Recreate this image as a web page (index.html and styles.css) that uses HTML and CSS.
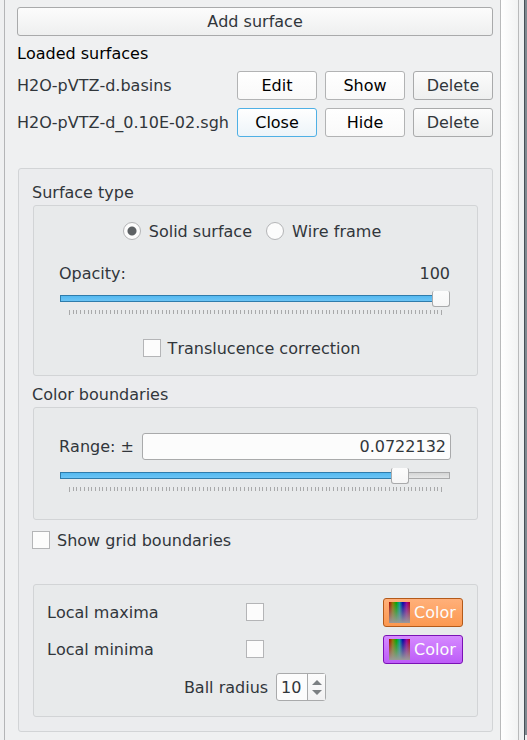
FILE: index.html
```html
<!DOCTYPE html>
<html lang="en">
<head>
<meta charset="utf-8">
<title>Surfaces</title>
<link rel="stylesheet" href="styles.css">
</head>
<body>
<div class="window">
  <main class="panel">
    <button class="btn add" type="button">Add surface</button>
    <h2 class="heading">Loaded surfaces</h2>
    <div class="surfaces">
      <span class="name">H2O-pVTZ-d.basins</span>
      <button class="btn toggle" type="button">Edit</button>
      <button class="btn toggle" type="button">Show</button>
      <button class="btn" type="button">Delete</button>
      <span class="name">H2O-pVTZ-d_0.10E-02.sgh</span>
      <button class="btn toggle active" type="button">Close</button>
      <button class="btn toggle" type="button">Hide</button>
      <button class="btn" type="button">Delete</button>
    </div>

    <section class="group editor">
      <h3 class="title">Surface type</h3>
      <div class="group type">
        <div class="choices">
          <label class="choice"><input class="radio" type="radio" name="style" checked>Solid surface</label>
          <label class="choice"><input class="radio" type="radio" name="style">Wire frame</label>
        </div>
        <div class="caption"><label for="opacity">Opacity:</label><output for="opacity">100</output></div>
        <input class="slider" id="opacity" type="range" min="0" max="100" value="100" style="--value: 100%">
        <svg class="ticks" height="5" aria-hidden="true"><use href="#ticks"/></svg>
        <div class="choices single">
          <label class="choice"><input class="check" type="checkbox">Translucence correction</label>
        </div>
      </div>

      <h3 class="title second">Color boundaries</h3>
      <div class="group bounds">
        <div class="field">
          <label for="range">Range: ±</label>
          <input class="text" id="range" type="text" value="0.0722132">
        </div>
        <input class="slider" type="range" min="0" max="100" value="89" aria-label="Range" style="--value: 89%">
        <svg class="ticks" height="5" aria-hidden="true"><use href="#ticks"/></svg>
      </div>

      <label class="choice grid-bounds"><input class="check" type="checkbox">Show grid boundaries</label>

      <div class="group extrema">
        <div class="row">
          <label for="maxima">Local maxima</label>
          <input class="check" id="maxima" type="checkbox">
          <button class="btn color orange" type="button"><svg class="spectrum" viewBox="0 0 21 21" aria-hidden="true"><use href="#spectrum"/></svg>Color</button>
        </div>
        <div class="row">
          <label for="minima">Local minima</label>
          <input class="check" id="minima" type="checkbox">
          <button class="btn color violet" type="button"><svg class="spectrum" viewBox="0 0 21 21" aria-hidden="true"><use href="#spectrum"/></svg>Color</button>
        </div>
        <div class="radius">
          <label for="radius">Ball radius</label>
          <div class="spin">
            <input id="radius" type="number" value="10">
            <div class="steps">
              <button type="button" aria-label="Increase"><svg viewBox="0 0 10 5"><path d="M0 5 5 0l5 5z"/></svg></button>
              <button type="button" aria-label="Decrease"><svg viewBox="0 0 10 5"><path d="M0 0h10L5 5z"/></svg></button>
            </div>
          </div>
        </div>
      </div>
    </section>
  </main>
  <div class="scrollbar"></div>
  <div class="edge"></div>
</div>

<svg class="defs" width="0" height="0" aria-hidden="true">
  <defs>
    <linearGradient id="hues">
      <stop offset="0" stop-color="#b00000"/>
      <stop offset=".18" stop-color="#8f7a00"/>
      <stop offset=".35" stop-color="#00a800"/>
      <stop offset=".5" stop-color="#009a9a"/>
      <stop offset=".66" stop-color="#0000a8"/>
      <stop offset=".84" stop-color="#980098"/>
      <stop offset="1" stop-color="#b00010"/>
    </linearGradient>
    <linearGradient id="fade" x2="0" y2="1">
      <stop offset="0" stop-color="#999" stop-opacity="0"/>
      <stop offset="1" stop-color="#999"/>
    </linearGradient>
    <g id="spectrum">
      <rect width="21" height="21" fill="url(#hues)"/>
      <rect width="21" height="21" fill="url(#fade)"/>
    </g>
    <g id="ticks" stroke="#a8a9aa" shape-rendering="crispEdges">
      <path d="M0 2h373" stroke-width="4" stroke-dasharray="1 2.72"/>
      <path d="M0 4.500h1M372 4.500h1"/>
    </g>
  </defs>
</svg>
</body>
</html>
```
FILE: styles.css
```css
* {
  box-sizing: border-box;
}

body {
  margin: 0;
  background: #eff0f1;
  color: #31363b;
  font: 16px/19px "DejaVu Sans", sans-serif;
  font-kerning: none;
}

button,
input {
  margin: 0;
  color: inherit;
  font: inherit;
}

.defs {
  position: absolute;
}

/* Window frame */
.window {
  display: flex;
  min-height: 100vh;
  padding-left: 4px;
}

.panel {
  flex: 1;
  min-width: 0;
  padding: 7px 7px 8px 12px;
  border-left: 1px solid #b4b5b7;
}

.scrollbar {
  width: 19px;
  border: solid #b9babb;
  border-width: 0 1px;
  background: linear-gradient(to right, #fff, #f2f3f3);
}

.edge {
  width: 8px;
  background:
    linear-gradient(#7f8990, #7f8990) right top / 2px calc(100% - 5px) no-repeat,
    linear-gradient(to left, #eff0f1 2px, #475057 2px 3px, #eff0f1 3px);
}

/* Buttons */
.btn {
  height: 29px;
  padding: 0;
  border: 1px solid #a9aaab;
  border-radius: 3px;
  background: linear-gradient(#fcfcfc, #eeefef);
}

.add {
  display: block;
  width: 100%;
}

.toggle {
  border-color: #b2b3b4;
  background: linear-gradient(#fff, #f9f9f9);
  color: #000;
}

.active {
  border-color: #4fb0e5;
  background: linear-gradient(#fff, #edf4f9);
}

/* Loaded surfaces */
.heading,
.title {
  margin: 0;
  font-size: 16px;
  font-weight: normal;
}

.heading {
  margin: 8px 0;
  color: #000;
}

.surfaces {
  display: grid;
  grid-template-columns: 1fr 80px 80px 80px;
  align-items: center;
  gap: 8px;
}

.name {
  min-width: 0;
  white-space: nowrap;
}

/* Groups */
.group {
  border: 1px solid #d2d4d6;
  border-radius: 3px;
  background: #e8eaeb;
}

.editor {
  margin: 31px 0 0 1px;
  padding: 14px;
  background: #ebecee;
}

.title {
  margin-left: -1px;
  margin-bottom: 3px;
}

.second {
  margin-top: 9px;
}

.type {
  padding: 16px 26px 17px 25px;
}

.bounds {
  padding: 25px 26px 27px 25px;
}

/* Choices */
.choices {
  display: flex;
  justify-content: center;
  gap: 8px;
}

.choice {
  display: flex;
  align-items: center;
  gap: 8px;
  padding-right: 6px;
}

.single {
  margin-top: 24px;
}

.single .choice {
  gap: 7px;
  padding-right: 7px;
}

.radio,
.check {
  flex: none;
  width: 18px;
  height: 18px;
  margin-bottom: 1px;
  border: 1px solid #b4b5b7;
  background: #fcfcfc;
  appearance: none;
}

.radio {
  border-radius: 50%;
}

.radio:checked {
  background: radial-gradient(circle, #5d6164 4px, #fcfcfc 5px);
}

.grid-bounds {
  gap: 7px;
  margin: 11px 0 0 -1px;
}

/* Sliders */
.caption {
  display: flex;
  justify-content: space-between;
  margin-top: 23px;
  padding-right: 1px;
}

.slider {
  display: block;
  width: calc(100% - 2px);
  height: 16px;
  margin: 8px 1px 3px;
  background: none;
  appearance: none;
}

.slider::-webkit-slider-runnable-track {
  height: 16px;
  background:
    linear-gradient(#2f7cab, #2f7cab) 0 5px / 1px 5px no-repeat,
    linear-gradient(#2f7cab 1px, #54b9f0 1px, #6bc4f5 6px, #2f7cab 6px) 0 4px / var(--value) 7px no-repeat,
    linear-gradient(#a9aaab, #a9aaab) 100% 5px / 1px 5px no-repeat,
    linear-gradient(#a9aaab 1px, #d4d5d5 1px, #e6e7e7 6px, #a9aaab 6px) 0 4px / 100% 7px no-repeat;
}

.slider::-webkit-slider-thumb {
  width: 18px;
  height: 16px;
  border: 1px solid #a9aaab;
  border-top: 0;
  border-radius: 2px 2px 3px 3px;
  background: linear-gradient(#fcfcfc, #f6f6f6);
  appearance: none;
}

.ticks {
  display: block;
  width: 373px;
  max-width: 100%;
  margin: 0 auto;
}

/* Text field */
.field {
  display: flex;
  align-items: center;
  gap: 8px;
}

.text {
  flex: 1;
  min-width: 0;
  height: 27px;
  padding: 0 4px;
  border: 1px solid #a9aaab;
  border-radius: 3px;
  background: #fcfcfc;
  text-align: right;
}

/* Extrema */
.extrema {
  margin-top: 34px;
  padding: 13px 14px 15px 13px;
}

.row {
  display: grid;
  grid-template-columns: 1fr 18px 1fr;
  align-items: center;
  margin-bottom: 8px;
}

.color {
  display: flex;
  align-items: center;
  justify-content: center;
  gap: 4px;
  width: 80px;
  padding-right: 1px;
  justify-self: end;
  color: #fcfcfc;
}

.orange {
  border-color: #b35a1a;
  background: linear-gradient(#ffb07a, #fc9850);
}

.violet {
  border-color: #7a12b5;
  background: linear-gradient(#d58aff, #bd5cf8);
}

.spectrum {
  width: 21px;
  height: 21px;
}

.radius {
  display: flex;
  align-items: center;
  justify-content: center;
  gap: 8px;
  padding-top: 1px;
}

.spin {
  display: flex;
  width: 50px;
  height: 28px;
  border: 1px solid #a9aaab;
  border-radius: 3px;
  background: #fcfcfc;
}

.spin input {
  flex: 1;
  min-width: 0;
  padding: 0 0 0 4px;
  border: 0;
  background: none;
  appearance: textfield;
}

.spin input::-webkit-inner-spin-button {
  display: none;
}

.steps {
  display: flex;
  flex-direction: column;
  width: 18px;
  padding: 3px 0;
  border-left: 1px solid #a9aaab;
  background: linear-gradient(#fcfcfc, #f1f1f2);
}

.steps button {
  display: flex;
  flex: 1;
  align-items: center;
  justify-content: center;
  padding: 0;
  border: 0;
  background: none;
}

.steps svg {
  width: 10px;
  height: 5px;
  fill: #7b7f82;
}
```
